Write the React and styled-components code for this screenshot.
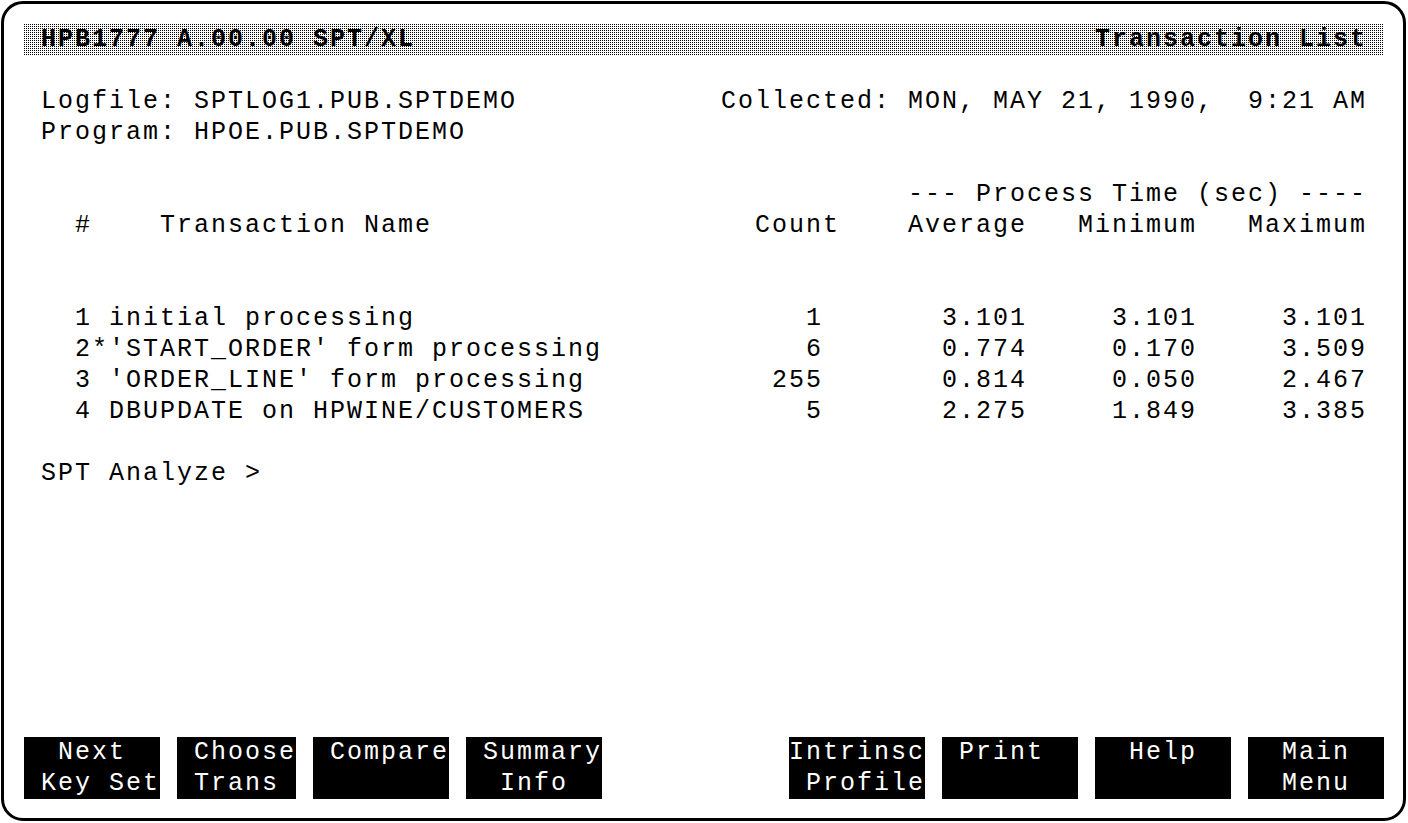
import React from 'react';
import styled, { createGlobalStyle } from 'styled-components';

// Terminal grid: 80 columns x 25 rows
const CELL = 17;
const ROW = 31;

const GlobalStyle = createGlobalStyle`
  html, body {
    margin: 0;
    padding: 0;
    background: #fff;
  }

  body {
    font-family: 'Liberation Mono', 'DejaVu Sans Mono', monospace;
  }
`;

// Styles
const Frame = styled.div`
  box-sizing: border-box;
  width: 1405px;
  height: 820px;
  margin: 1px 0 0 1px;
  padding: 20px 0 0 20px;
  border: 3px solid #000;
  border-radius: 22px;
  background: #fff;
`;

const Screen = styled.div`
  display: flex;
  flex-direction: column;
  width: ${80 * CELL}px;
  height: ${25 * ROW}px;
  font: 400 25px/${ROW}px 'Liberation Mono', 'DejaVu Sans Mono', monospace;
  letter-spacing: 2px;
  color: #000;
  white-space: pre;
`;

const Line = styled.div`
  display: flex;
  justify-content: ${({ $justify }) => $justify || 'flex-start'};
  flex: none;
  height: ${ROW}px;
  padding: 0 ${CELL}px;
`;

const TitleBar = styled(Line)`
  justify-content: space-between;
  font-weight: 700;
  background-color: #fff;
  background-image: conic-gradient(at 1px 1px, transparent 0 75%, #000 75% 100%);
  background-size: 2px 2px;
`;

const Spacer = styled.div`
  flex: none;
  height: ${({ $rows }) => $rows * ROW}px;
`;

const Field = styled.span`
  flex: none;
  box-sizing: border-box;
  width: ${({ $w }) => $w * CELL}px;
  padding-left: ${({ $indent }) => ($indent || 0) * CELL}px;
  text-align: ${({ $align }) => $align || 'left'};
  overflow: hidden;
`;

const SoftKeyBar = styled.div`
  display: flex;
  justify-content: space-between;
  margin-top: auto;
`;

const KeyGroup = styled.div`
  display: flex;
  gap: ${CELL}px;
`;

const SoftKey = styled.div`
  display: flex;
  flex-direction: column;
  width: ${({ $cols }) => $cols * CELL}px;
  height: ${2 * ROW}px;
  background: #000;
  color: #fff;
  overflow: hidden;
`;

const KeyLine = styled.div`
  height: ${ROW}px;
  padding-left: ${({ $indent }) => $indent * CELL}px;
`;

// Data
const transactions = [
  { n: '1', mark: ' ', name: 'initial processing', count: '1', avg: '3.101', min: '3.101', max: '3.101' },
  { n: '2', mark: '*', name: "'START_ORDER' form processing", count: '6', avg: '0.774', min: '0.170', max: '3.509' },
  { n: '3', mark: ' ', name: "'ORDER_LINE' form processing", count: '255', avg: '0.814', min: '0.050', max: '2.467' },
  { n: '4', mark: ' ', name: 'DBUPDATE on HPWINE/CUSTOMERS', count: '5', avg: '2.275', min: '1.849', max: '3.385' },
];

const leftKeys = [
  { cols: 8, lines: [['Next', 2], ['Key Set', 1]] },
  { cols: 7, lines: [['Choose', 1], ['Trans', 1]] },
  { cols: 8, lines: [['Compare', 1]] },
  { cols: 8, lines: [['Summary', 1], ['Info', 2]] },
];

const rightKeys = [
  { cols: 8, lines: [['Intrinsc', 0], ['Profile', 1]] },
  { cols: 8, lines: [['Print', 1]] },
  { cols: 8, lines: [['Help', 2]] },
  { cols: 8, lines: [['Main', 2], ['Menu', 2]] },
];

const renderKeys = (keys) => keys.map((key, i) => (
  <SoftKey key={i} $cols={key.cols}>
    {key.lines.map(([label, indent]) => (
      <KeyLine key={label} $indent={indent}>{label}</KeyLine>
    ))}
  </SoftKey>
));

const App = () => (
  <>
    <GlobalStyle />
    <Frame>
      <Screen>
        <TitleBar>
          <span>HPB1777 A.00.00 SPT/XL</span>
          <span>Transaction List</span>
        </TitleBar>
        <Spacer $rows={1} />
        <Line $justify='space-between'>
          <span>Logfile: SPTLOG1.PUB.SPTDEMO</span>
          <span>Collected: MON, MAY 21, 1990,  9:21 AM</span>
        </Line>
        <Line>
          <span>Program: HPOE.PUB.SPTDEMO</span>
        </Line>
        <Spacer $rows={1} />
        <Line $justify='flex-end'>
          <span>--- Process Time (sec) ----</span>
        </Line>
        <Line>
          <Field $w={3} $align='right'>#</Field>
          <Field $w={39} $indent={4}>Transaction Name</Field>
          <Field $w={5}>Count</Field>
          <Field $w={11} $align='right'>Average</Field>
          <Field $w={10} $align='right'>Minimum</Field>
          <Field $w={10} $align='right'>Maximum</Field>
        </Line>
        <Spacer $rows={2} />
        {transactions.map((t) => (
          <Line key={t.n}>
            <Field $w={3} $align='right'>{t.n}</Field>
            <Field $w={1}>{t.mark}</Field>
            <Field $w={37}>{t.name}</Field>
            <Field $w={5} $align='right'>{t.count}</Field>
            <Field $w={12} $align='right'>{t.avg}</Field>
            <Field $w={10} $align='right'>{t.min}</Field>
            <Field $w={10} $align='right'>{t.max}</Field>
          </Line>
        ))}
        <Spacer $rows={1} />
        <Line>
          <span>SPT Analyze &gt;</span>
        </Line>
        <SoftKeyBar>
          <KeyGroup>{renderKeys(leftKeys)}</KeyGroup>
          <KeyGroup>{renderKeys(rightKeys)}</KeyGroup>
        </SoftKeyBar>
      </Screen>
    </Frame>
  </>
);

export default App;
